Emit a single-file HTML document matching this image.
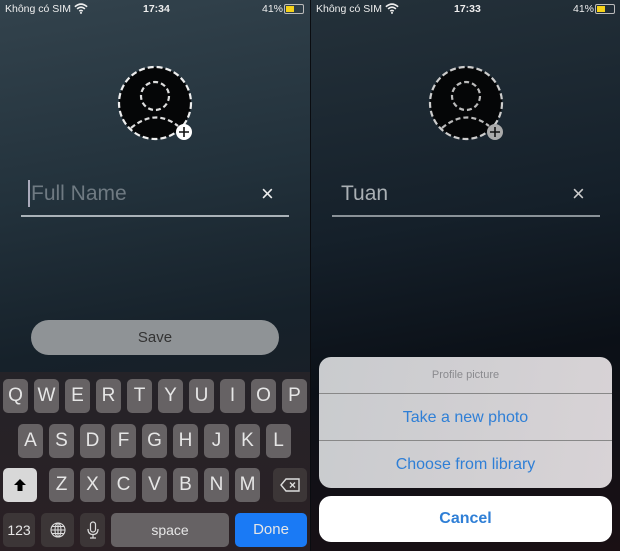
<!DOCTYPE html>
<html><head><meta charset="utf-8"><style>
*{margin:0;padding:0;box-sizing:border-box}
body{width:620px;height:551px;overflow:hidden;background:#000;font-family:"Liberation Sans",sans-serif;position:relative}
.p{position:absolute;top:0;height:551px;width:310px;overflow:hidden}
#L{left:0;background:linear-gradient(170deg,#33434d 0%,#22313b 35%,#16212a 60%,#1d1a20 100%)}
#R{left:310px;background:linear-gradient(170deg,#24313a 0%,#15202a 40%,#0b1017 65%,#1a1014 100%)}
.ab{position:absolute}
.sb{font-size:10.5px;color:#eee;top:3px}
.k{position:absolute;height:34px;border-radius:5px;background:#666264;color:#e6e6e6;font-size:19px;text-align:center;line-height:34px;width:25px}
.kb{position:absolute;left:0;top:372px;width:310px;height:179px;background:linear-gradient(#252328,#2a2024)}
.d{background:#3c3637}
</style></head><body>
<div class="p" id="L">
 <div class="ab sb" style="left:5px">Không có SIM</div>
 <div class="ab sb" style="left:143px;font-weight:bold">17:34</div>
 <div class="ab sb" style="left:262px">41%</div>
 <div class="ab" style="left:284px;top:4px;width:20px;height:10px;border:1px solid #bbb;border-radius:2px"><div style="width:8px;height:6px;margin:1px;background:#f5d21a"></div></div>
 <svg class="ab" style="left:74px;top:3px" width="14" height="11" viewBox="0 0 16 12"><path d="M1 4Q8-2 15 4M3.5 6.5Q8 2.5 12.5 6.5M6 9Q8 7.5 10 9" stroke="#eee" stroke-width="1.8" fill="none"/><circle cx="8" cy="11" r="1.2" fill="#eee"/></svg>
 <svg class="ab" style="left:116px;top:64px" width="80" height="80" viewBox="0 0 80 80"><circle cx="39" cy="39" r="36" fill="#050607" stroke="#eee" stroke-width="2.2" stroke-dasharray="6 3"/><circle cx="39" cy="32" r="14" fill="none" stroke="#ddd" stroke-width="2.2" stroke-dasharray="5 3"/><path d="M15 64Q39 44 62 62" fill="none" stroke="#ddd" stroke-width="2.2" stroke-dasharray="5 3"/><circle cx="68" cy="68" r="8" fill="#fff"/><path d="M68 63v10M63 68h10" stroke="#111" stroke-width="1.6"/></svg>
 <div class="ab" style="left:28px;top:180px;width:2px;height:27px;background:#aab"></div>
 <div class="ab" style="left:31px;top:182px;font-size:21px;color:#6f7a82">Full Name</div>
 <div class="ab" style="left:261px;top:181px;font-size:22px;color:#eee">×</div>
 <div class="ab" style="left:21px;top:215px;width:268px;height:2px;background:#aab2b8"></div>
 <div class="ab" style="left:31px;top:320px;width:248px;height:35px;border-radius:18px;background:#8f9396;color:#333;font-size:15px;text-align:center;line-height:35px">Save</div>
 <div class="kb"></div>
 <div class="k" style="left:3px;top:379px">Q</div><div class="k" style="left:34px;top:379px">W</div><div class="k" style="left:65px;top:379px">E</div><div class="k" style="left:96px;top:379px">R</div><div class="k" style="left:127px;top:379px">T</div><div class="k" style="left:158px;top:379px">Y</div><div class="k" style="left:189px;top:379px">U</div><div class="k" style="left:220px;top:379px">I</div><div class="k" style="left:251px;top:379px">O</div><div class="k" style="left:282px;top:379px">P</div>
 <div class="k" style="left:18px;top:424px">A</div><div class="k" style="left:49px;top:424px">S</div><div class="k" style="left:80px;top:424px">D</div><div class="k" style="left:111px;top:424px">F</div><div class="k" style="left:142px;top:424px">G</div><div class="k" style="left:173px;top:424px">H</div><div class="k" style="left:204px;top:424px">J</div><div class="k" style="left:235px;top:424px">K</div><div class="k" style="left:266px;top:424px">L</div>
 <div class="k" style="left:3px;top:468px;width:34px;background:#d8d8d8"><svg width="14" height="14" viewBox="0 0 14 14" style="margin-top:10px"><path d="M7 1L13 7H9.5V13H4.5V7H1Z" fill="#000"/></svg></div>
 <div class="k" style="left:49px;top:468px">Z</div><div class="k" style="left:80px;top:468px">X</div><div class="k" style="left:111px;top:468px">C</div><div class="k" style="left:142px;top:468px">V</div><div class="k" style="left:173px;top:468px">B</div><div class="k" style="left:204px;top:468px">N</div><div class="k" style="left:235px;top:468px">M</div>
 <div class="k d" style="left:273px;top:468px;width:34px"><svg width="20" height="14" viewBox="0 0 20 14" style="margin-top:10px"><path d="M6 1H19V13H6L1 7Z" fill="none" stroke="#ddd" stroke-width="1.4"/><path d="M10 4.5L15 9.5M15 4.5L10 9.5" stroke="#ddd" stroke-width="1.4"/></svg></div>
 <div class="k d" style="left:3px;top:513px;width:32px;font-size:14px">123</div>
 <div class="k d" style="left:41px;top:513px;width:33px"><svg width="16" height="16" viewBox="0 0 16 16" style="margin-top:9px"><g fill="none" stroke="#ddd" stroke-width="1.1"><circle cx="8" cy="8" r="7"/><ellipse cx="8" cy="8" rx="3" ry="7"/><path d="M8 1V15M1 8H15M2.5 4.5H13.5M2.5 11.5H13.5"/></g></svg></div>
 <div class="k d" style="left:80px;top:513px;width:25px"><svg width="12" height="18" viewBox="0 0 12 18" style="margin-top:8px"><g fill="none" stroke="#ddd" stroke-width="1.2"><rect x="3.5" y="1" width="5" height="10" rx="2.5"/><path d="M1 8Q1 13.5 6 13.5Q11 13.5 11 8M6 13.5V17M3 17H9"/></g></svg></div>
 <div class="k" style="left:111px;top:513px;width:118px;font-size:14px">space</div>
 <div class="k" style="left:235px;top:513px;width:72px;background:#1a7af5;font-size:15px">Done</div>
</div>
<div class="p" id="R" style="border-left:1px solid #0a0c10">
 <div class="ab sb" style="left:5px">Không có SIM</div>
 <div class="ab sb" style="left:143px;font-weight:bold">17:33</div>
 <div class="ab sb" style="left:262px">41%</div>
 <div class="ab" style="left:284px;top:4px;width:20px;height:10px;border:1px solid #bbb;border-radius:2px"><div style="width:8px;height:6px;margin:1px;background:#f5d21a"></div></div>
 <svg class="ab" style="left:74px;top:3px" width="14" height="11" viewBox="0 0 16 12"><path d="M1 4Q8-2 15 4M3.5 6.5Q8 2.5 12.5 6.5M6 9Q8 7.5 10 9" stroke="#eee" stroke-width="1.8" fill="none"/><circle cx="8" cy="11" r="1.2" fill="#eee"/></svg>
 <svg class="ab" style="left:116px;top:64px" width="80" height="80" viewBox="0 0 80 80"><circle cx="39" cy="39" r="36" fill="#050607" stroke="#ccc" stroke-width="2.2" stroke-dasharray="6 3"/><circle cx="39" cy="32" r="14" fill="none" stroke="#bbb" stroke-width="2.2" stroke-dasharray="5 3"/><path d="M15 64Q39 44 62 62" fill="none" stroke="#bbb" stroke-width="2.2" stroke-dasharray="5 3"/><circle cx="68" cy="68" r="8" fill="#aaa"/><path d="M68 63v10M63 68h10" stroke="#111" stroke-width="1.6"/></svg>
 <div class="ab" style="left:30px;top:182px;font-size:21px;color:#aab0b4">Tuan</div>
 <div class="ab" style="left:261px;top:181px;font-size:22px;color:#ccc">×</div>
 <div class="ab" style="left:21px;top:215px;width:268px;height:2px;background:#8a9298"></div>
 <div class="ab" style="left:8px;top:357px;width:293px;height:131px;border-radius:12px;background:linear-gradient(100deg,#c9cbce,#d8d3d6);overflow:hidden">
  <div style="height:37px;line-height:37px;text-align:center;font-size:11px;color:#8a8a8e;border-bottom:1px solid #888">Profile picture</div>
  <div style="height:47px;line-height:47px;text-align:center;font-size:16px;color:#2f7fd6;border-bottom:1px solid #888">Take a new photo</div>
  <div style="height:47px;line-height:47px;text-align:center;font-size:16px;color:#2f7fd6">Choose from library</div>
 </div>
 <div class="ab" style="left:8px;top:496px;width:293px;height:46px;border-radius:12px;background:#fff;text-align:center;line-height:46px;font-size:16px;font-weight:bold;color:#2f7fd6">Cancel</div>
</div>
</body></html>
